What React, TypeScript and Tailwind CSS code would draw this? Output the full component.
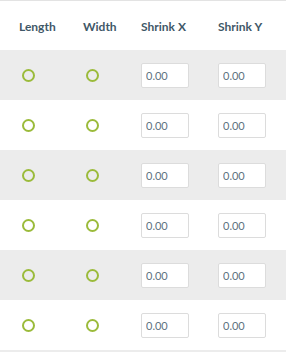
const rows = [0, 1, 2, 3, 4, 5];

const Ring = () => (
  <span className="block w-[13px] h-[13px] rounded-full border-2 border-[#9bbb3b] ml-[3px]" />
);

const NumInput = () => (
  <input
    readOnly
    value="0.00"
    className="w-[48px] h-[25px] bg-white border border-[#dcdcdc] rounded-[2px] px-[4px] text-[11px] text-[#5d7280] outline-none"
    style={{ fontFamily: 'Lato, sans-serif' }}
  />
);

export default function App() {
  return (
    <div className="w-[286px] h-[352px] bg-white overflow-hidden" style={{ fontFamily: 'Lato, "Open Sans", sans-serif' }}>
      <div className="h-px bg-[#e3e3e3]" />
      {/* header */}
      <div className="grid grid-cols-[64px_58px_77px_1fr] pl-[19px] pt-[3px] h-[49px] items-center text-[12px] font-bold text-[#3f5868]">
        <span>Length</span>
        <span>Width</span>
        <span>Shrink X</span>
        <span>Shrink Y</span>
      </div>
      {rows.map(i => (
        <div
          key={i}
          className={`grid grid-cols-[64px_58px_77px_1fr] pl-[19px] h-[50px] items-center ${
            i % 2 === 0 ? 'bg-[#ececec]' : 'bg-white'
          }`}
        >
          <Ring />
          <Ring />
          <NumInput />
          <NumInput />
        </div>
      ))}
      <div className="h-[3px] bg-[#ececec]" />
    </div>
  );
}
